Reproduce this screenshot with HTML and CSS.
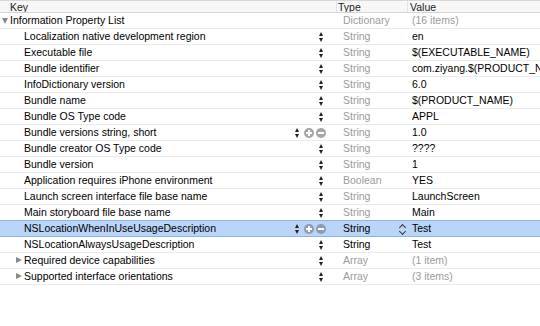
FILE: index.html
```html
<!DOCTYPE html>
<html lang="en">
<head>
	<meta charset="UTF-8">
	<title>Info.plist</title>
	<link rel="stylesheet" href="styles.css">
</head>
<body>
	<div class="plist">
		<div class="plist-head">
			<div class="col-key">Key</div>
			<div class="col-type">Type</div>
			<div class="col-value">Value</div>
		</div>

		<div class="plist-row">
			<div class="col-key"><span class="disclosure open"></span>Information Property List</div>
			<div class="col-type dim">Dictionary</div>
			<div class="col-value dim">(16 items)</div>
		</div>

		<div class="plist-row">
			<div class="col-key child">Localization native development region<span class="ctrl"><i class="stepper"></i></span></div>
			<div class="col-type dim">String</div>
			<div class="col-value">en</div>
		</div>
		<div class="plist-row">
			<div class="col-key child">Executable file<span class="ctrl"><i class="stepper"></i></span></div>
			<div class="col-type dim">String</div>
			<div class="col-value">$(EXECUTABLE_NAME)</div>
		</div>
		<div class="plist-row">
			<div class="col-key child">Bundle identifier<span class="ctrl"><i class="stepper"></i></span></div>
			<div class="col-type dim">String</div>
			<div class="col-value">com.ziyang.$(PRODUCT_NA</div>
		</div>
		<div class="plist-row">
			<div class="col-key child">InfoDictionary version<span class="ctrl"><i class="stepper"></i></span></div>
			<div class="col-type dim">String</div>
			<div class="col-value">6.0</div>
		</div>
		<div class="plist-row">
			<div class="col-key child">Bundle name<span class="ctrl"><i class="stepper"></i></span></div>
			<div class="col-type dim">String</div>
			<div class="col-value">$(PRODUCT_NAME)</div>
		</div>
		<div class="plist-row">
			<div class="col-key child">Bundle OS Type code<span class="ctrl"><i class="stepper"></i></span></div>
			<div class="col-type dim">String</div>
			<div class="col-value">APPL</div>
		</div>
		<div class="plist-row">
			<div class="col-key child">Bundle versions string, short<span class="ctrl"><i class="stepper"></i><i class="btn-add"></i><i class="btn-remove"></i></span></div>
			<div class="col-type dim">String</div>
			<div class="col-value">1.0</div>
		</div>
		<div class="plist-row">
			<div class="col-key child">Bundle creator OS Type code<span class="ctrl"><i class="stepper"></i></span></div>
			<div class="col-type dim">String</div>
			<div class="col-value">????</div>
		</div>
		<div class="plist-row">
			<div class="col-key child">Bundle version<span class="ctrl"><i class="stepper"></i></span></div>
			<div class="col-type dim">String</div>
			<div class="col-value">1</div>
		</div>
		<div class="plist-row">
			<div class="col-key child">Application requires iPhone environment<span class="ctrl"><i class="stepper"></i></span></div>
			<div class="col-type dim">Boolean</div>
			<div class="col-value">YES</div>
		</div>
		<div class="plist-row">
			<div class="col-key child">Launch screen interface file base name<span class="ctrl"><i class="stepper"></i></span></div>
			<div class="col-type dim">String</div>
			<div class="col-value">LaunchScreen</div>
		</div>
		<div class="plist-row">
			<div class="col-key child">Main storyboard file base name<span class="ctrl"><i class="stepper"></i></span></div>
			<div class="col-type dim">String</div>
			<div class="col-value">Main</div>
		</div>
		<div class="plist-row selected">
			<div class="col-key child">NSLocationWhenInUseUsageDescription<span class="ctrl"><i class="stepper"></i><i class="btn-add"></i><i class="btn-remove"></i></span></div>
			<div class="col-type">String<span class="chevrons"></span></div>
			<div class="col-value">Test</div>
		</div>
		<div class="plist-row">
			<div class="col-key child">NSLocationAlwaysUsageDescription<span class="ctrl"><i class="stepper"></i></span></div>
			<div class="col-type">String</div>
			<div class="col-value">Test</div>
		</div>
		<div class="plist-row">
			<div class="col-key child"><span class="disclosure"></span>Required device capabilities<span class="ctrl"><i class="stepper"></i></span></div>
			<div class="col-type dim">Array</div>
			<div class="col-value dim">(1 item)</div>
		</div>
		<div class="plist-row">
			<div class="col-key child"><span class="disclosure"></span>Supported interface orientations<span class="ctrl"><i class="stepper"></i></span></div>
			<div class="col-type dim">Array</div>
			<div class="col-value dim">(3 items)</div>
		</div>
	</div>
</body>
</html>
```

FILE: styles.css
```css
* {
	margin: 0;
	padding: 0;
	box-sizing: border-box;
}
body {
	background: #fff;
	font-family: "Liberation Sans", Arial, sans-serif;
	font-size: 10.5px;
	color: #000;
}

.plist-head,
.plist-row {
	display: grid;
	grid-template-columns: 337px 71px 1fr;
	height: 16px;
	line-height: 15px;
	white-space: nowrap;
	overflow: hidden;
	border-bottom: 1px solid #ebebeb;
}
.plist-head {
	height: 13px;
	line-height: 12px;
	background: #f7f7f7;
	border-top: 1px solid #d8d8d8;
	border-bottom: 1px solid #d4d4d4;
	color: #222;
}
.plist-head .col-key {
	padding-left: 10px;
	border-right: 1px solid #e4e4e4;
}
.plist-head .col-type {
	padding-left: 1px;
	border-right: 1px solid #e4e4e4;
}
.plist-head .col-value {
	padding-left: 2px;
}

.col-key {
	position: relative;
	padding-left: 10px;
	overflow: hidden;
}
.col-key.child {
	padding-left: 24px;
}
.col-type {
	position: relative;
	padding-left: 6px;
}
.col-value {
	padding-left: 4px;
	overflow: hidden;
}
.dim {
	color: #9b9b9b;
}

.plist-row.selected {
	background: #bad5f7;
	border-top: 1px solid #8eb4e3;
	border-bottom: 1px solid #8eb4e3;
	margin-top: -1px;
	height: 17px;
}

/* disclosure triangles */
.disclosure {
	position: absolute;
	top: 4px;
	left: 16px;
	width: 0;
	height: 0;
	border-left: 6px solid #8a8a8a;
	border-top: 3.5px solid transparent;
	border-bottom: 3.5px solid transparent;
}
.disclosure.open {
	top: 5px;
	left: 2px;
	border-top: 6px solid #8a8a8a;
	border-left: 3.5px solid transparent;
	border-right: 3.5px solid transparent;
	border-bottom: 0;
}

/* row controls */
.ctrl {
	position: absolute;
	top: 0;
	right: 11px;
	height: 15px;
	display: flex;
	align-items: center;
	gap: 2px;
}
.stepper {
	display: block;
	width: 5px;
	height: 10px;
	position: relative;
	margin-right: 2px;
}
.stepper::before,
.stepper::after {
	content: "";
	position: absolute;
	left: 0;
	width: 0;
	height: 0;
	border-left: 2.5px solid transparent;
	border-right: 2.5px solid transparent;
}
.stepper::before {
	top: 0;
	border-bottom: 4px solid #222;
}
.stepper::after {
	bottom: 0;
	border-top: 4px solid #222;
}
.btn-add,
.btn-remove {
	display: block;
	width: 10px;
	height: 10px;
	border-radius: 50%;
	background: #a6a6a6;
	position: relative;
}
.btn-add::before,
.btn-remove::before {
	content: "";
	position: absolute;
	left: 2px;
	top: 4px;
	width: 6px;
	height: 2px;
	background: #fff;
}
.btn-add::after {
	content: "";
	position: absolute;
	left: 4px;
	top: 2px;
	width: 2px;
	height: 6px;
	background: #fff;
}
.selected .btn-add,
.selected .btn-remove {
	background: #8d9cb0;
}

/* value popup chevrons */
.chevrons {
	position: absolute;
	top: 3px;
	left: 62px;
	width: 7px;
	height: 10px;
}
.chevrons::before,
.chevrons::after {
	content: "";
	position: absolute;
	left: 1px;
	width: 4px;
	height: 4px;
	border-left: 1.3px solid #333;
	border-top: 1.3px solid #333;
}
.chevrons::before {
	top: 1px;
	transform: rotate(45deg);
}
.chevrons::after {
	top: 5px;
	transform: rotate(-135deg);
}
```
